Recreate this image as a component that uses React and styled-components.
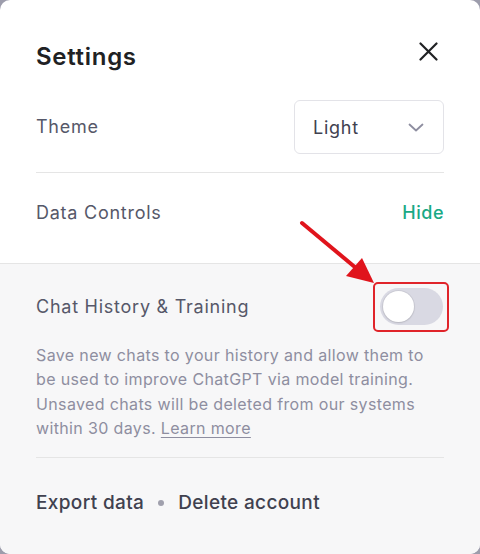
import React from "react";
import styled, { createGlobalStyle } from "styled-components";

const Global = createGlobalStyle`
  html, body { margin: 0; padding: 0; background: #9d9dac; }
  body { font-family: Inter, "Noto Sans", "Liberation Sans", sans-serif; }
  * { box-sizing: border-box; }
`;

const Card = styled.div`
  position: relative;
  width: 480px;
  height: 554px;
  background: #ffffff;
  border-radius: 10px;
  overflow: hidden;
  display: flex;
  flex-direction: column;
`;

const Header = styled.div`
  display: flex;
  align-items: center;
  justify-content: space-between;
  padding: 41px 36px 0 36px;
`;

const Title = styled.h2`
  margin: 0;
  font-size: 24px;
  line-height: 32px;
  font-weight: 600;
  color: #202123;
  letter-spacing: 0.7px;
`;

const CloseButton = styled.button`
  border: 0;
  background: none;
  padding: 0;
  width: 22px;
  height: 22px;
  display: flex;
  align-items: center;
  justify-content: center;
  margin-right: 5px;
  margin-top: -12px;
  color: #202123;
`;

const TopSection = styled.div`
  padding: 0 36px;
`;

const Row = styled.div`
  display: flex;
  align-items: center;
  justify-content: space-between;
  padding: ${(p) => p.$pad};
  border-bottom: ${(p) => (p.$divider ? "1px solid #e5e5e5" : "none")};
`;

const Label = styled.span`
  font-size: 18px;
  line-height: 24px;
  color: #565869;
  letter-spacing: 0.75px;
`;

const Select = styled.div`
  width: 150px;
  height: 54px;
  border: 1px solid #e3e3e8;
  border-radius: 6px;
  display: flex;
  align-items: center;
  justify-content: space-between;
  padding: 0 19px 0 18px;
  font-size: 18px;
  color: #40414f;
  letter-spacing: 0.75px;
`;

const LinkButton = styled.span`
  font-size: 18px;
  line-height: 24px;
  color: #19a985;
  font-weight: 500;
  letter-spacing: 0.5px;
`;

const GraySection = styled.div`
  flex: 1;
  background: #f7f7f8;
  border-top: 1px solid #e5e5e5;
  padding: 0 36px;
`;

const ToggleFrame = styled.div`
  position: relative;
  margin-right: 1px;
`;

const Track = styled.div`
  width: 63px;
  height: 37px;
  border-radius: 19px;
  background: #d9d9e3;
  padding: 3px;
  display: flex;
  align-items: center;
`;

const Knob = styled.div`
  width: 31px;
  height: 31px;
  border-radius: 50%;
  background: #ffffff;
  box-shadow: 0 0 0 1px rgba(0, 0, 0, 0.06), 0 1px 2px rgba(0, 0, 0, 0.1);
`;

const Highlight = styled.div`
  position: absolute;
  left: -7px;
  top: -6px;
  right: -6px;
  bottom: -7px;
  border: 2.5px solid #e0242a;
  border-radius: 5px;
  pointer-events: none;
`;

const Description = styled.p`
  margin: 18px 0 0 0;
  padding-bottom: 17px;
  font-size: 16px;
  line-height: 24.3px;
  color: #8e8ea0;
  letter-spacing: 0.36px;
  border-bottom: 1px solid #e5e5e5;
`;

const Learn = styled.a`
  color: #8e8ea0;
  text-decoration: underline;
  text-underline-offset: 3px;
`;

const Footer = styled.div`
  display: flex;
  align-items: center;
  gap: 12px;
  padding-top: 33px;
  font-size: 19px;
  line-height: 24px;
  color: #40414f;
  font-weight: 500;
  letter-spacing: 0.35px;
`;

const Dot = styled.span`
  width: 6px;
  height: 6px;
  border-radius: 50%;
  background: #a0a0ad;
  margin: 0 2px;
`;

const Arrow = styled.svg`
  position: absolute;
  left: 0;
  top: 0;
  pointer-events: none;
`;

export default function App() {
  return (
    <>
      <Global />
      <Card>
        <Header>
          <Title>Settings</Title>
          <CloseButton aria-label="Close">
            <svg width="19" height="19" viewBox="0 0 19 19" fill="none" stroke="currentColor" strokeWidth="2.2" strokeLinecap="round">
              <path d="M1.5 1.5 L17.5 17.5 M17.5 1.5 L1.5 17.5" />
            </svg>
          </CloseButton>
        </Header>
        <TopSection>
          <Row $pad="27px 0 18px 0" $divider>
            <Label>Theme</Label>
            <Select>
              <span>Light</span>
              <svg width="16" height="9" viewBox="0 0 16 9" fill="none" stroke="#8e8ea0" strokeWidth="1.8" strokeLinecap="round" strokeLinejoin="round">
                <path d="M1.5 1.5 L8 7.5 L14.5 1.5" />
              </svg>
            </Select>
          </Row>
          <Row $pad="28px 0 38px 0">
            <Label>Data Controls</Label>
            <LinkButton>Hide</LinkButton>
          </Row>
        </TopSection>
        <GraySection>
          <Row $pad="24px 0 0 0">
            <Label>Chat History &amp; Training</Label>
            <ToggleFrame>
              <Track>
                <Knob />
              </Track>
              <Highlight />
            </ToggleFrame>
          </Row>
          <Description>
            Save new chats to your history and allow them to be used to improve
            ChatGPT via model training. Unsaved chats will be deleted from our
            systems within 30 days. <Learn>Learn more</Learn>
          </Description>
          <Footer>
            <span>Export data</span>
            <Dot />
            <span>Delete account</span>
          </Footer>
        </GraySection>
        <Arrow width="480" height="554" viewBox="0 0 480 554">
          <line x1="302" y1="223" x2="356" y2="268" stroke="#e0141c" strokeWidth="4" strokeLinecap="round" />
          <polygon points="374,283 346,276 362,258" fill="#e0141c" />
        </Arrow>
      </Card>
    </>
  );
}
